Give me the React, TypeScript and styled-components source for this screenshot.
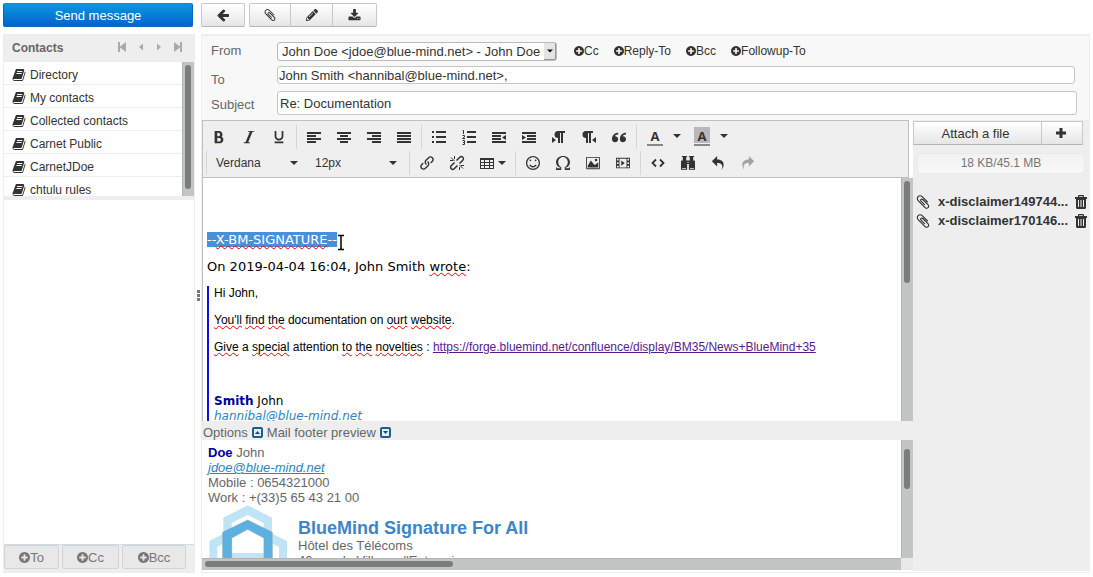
import React from "react";
import styled, { createGlobalStyle, css } from "styled-components";
import { FaPencilAlt } from "react-icons/fa";
import {
  ImBold,
  ImItalic,
  ImUnderline,
  ImQuotesLeft,
  ImLink,
  ImSmile,
  ImOmega,
  ImImage,
  ImFilm,
  ImBinoculars,
  ImUndo2,
  ImRedo2,
} from "react-icons/im";

const GlobalStyle = createGlobalStyle`
  *, *::before, *::after { box-sizing: border-box; }
  html, body { margin: 0; background: #fff; }
  body {
    font-family: "Liberation Sans", Arial, sans-serif;
    font-size: 13px;
    line-height: 15px;
    color: #666;
  }
  button, input, select { font: inherit; color: inherit; margin: 0; }
  svg { display: block; flex: none; }
`;

/* ---------- icons ---------- */

const awesome = {
  arrowLeft:
    "M1664 896v128q0 53-32.500 90.500t-84.500 37.500h-704l293 294q38 36 38 90t-38 90l-75 76q-37 37-90 37-52 0-91-37l-651-652q-37-37-37-90 0-52 37-91l651-650q38-38 91-38 52 0 90 38l75 74q38 38 38 91t-38 91l-293 293h704q52 0 84.500 37.500t32.500 90.500z",
  paperclip:
    "M1596 1385q0 117-79 196t-196 79q-135 0-235-100l-777-776q-113-115-113-271 0-159 110-270t269-111q158 0 273 113l605 606q10 10 10 22 0 16-30.500 46.500t-46.500 30.500q-13 0-23-10l-606-607q-79-77-181-77-106 0-179 75t-73 181q0 105 76 181l776 777q63 63 145 63 64 0 106-42t42-106q0-82-63-145l-581-581q-26-24-60-24-29 0-48 19t-19 48q0 32 25 59l410 410q10 10 10 22 0 16-31 47t-47 31q-12 0-22-10l-410-410q-63-61-63-149 0-82 57-139t139-57q88 0 149 63l581 581q100 98 100 235z",
  download:
    "M1344 1344q0-26-19-45t-45-19-45 19-19 45 19 45 45 19 45-19 19-45zm256 0q0-26-19-45t-45-19-45 19-19 45 19 45 45 19 45-19 19-45zm128-224v320q0 40-28 68t-68 28h-1472q-40 0-68-28t-28-68v-320q0-40 28-68t68-28h465l135 136q58 56 136 56t136-56l136-136h464q40 0 68 28t28 68zm-325-569q17 41-14 70l-448 448q-18 19-45 19t-45-19l-448-448q-31-29-14-70 17-39 59-39h256v-448q0-26 19-45t45-19h256q26 0 45 19t19 45v448h256q42 0 59 39z",
  book: "M1703 478q40 57 18 129l-275 906q-19 64-76.500 107.500t-122.500 43.500h-923q-77 0-148.500-53.500t-99.500-131.500q-24-67-2-127 0-4 3-27t4-37q1-8-3-21.500t-3-19.500q2-11 8-21t16.500-23.500 16.500-23.500q23-38 45-91.500t30-91.500q3-10 .5-30t-.5-28q3-11 17-28t17-23q21-36 42-92t25-90q1-9-2.500-32t.5-28q4-13 22-30.500t22-22.500q19-26 42.500-84.500t27.500-96.500q1-8-3-25.500t-2-26.500q2-8 9-18t18-23 17-21q8-12 16.500-30.500t15-35 16-36 19.500-32 26.500-23.500 36-11.500 47.500 5.500l-1 3q38-9 51-9h761q74 0 114 56t18 130l-274 906q-36 119-71.500 153.500t-128.500 34.500h-869q-27 0-38 15-11 16-1 43 24 70 144 70h923q29 0 56-15.500t35-41.500l300-987q7-22 5-57 38 15 59 43zm-1064 2q-4 13 2 22.500t20 9.500h608q13 0 25.500-9.500t16.500-22.500l21-64q4-13-2-22.500t-20-9.500h-608q-13 0-25.500 9.500t-16.500 22.500zm-83 256q-4 13 2 22.500t20 9.500h608q13 0 25.500-9.500t16.500-22.500l21-64q4-13-2-22.500t-20-9.500h-608q-13 0-25.500 9.500t-16.500 22.500z",
};

const Awesome = ({ name, size = 14 }: { name: keyof typeof awesome; size?: number }) => (
  <svg width={size} height={size} viewBox="0 0 1792 1792" fill="currentColor" aria-hidden="true">
    <path d={awesome[name]} />
  </svg>
);

const PlusCircle = ({ size = 10 }: { size?: number }) => (
  <svg width={size} height={size} viewBox="128 128 1536 1536" fill="currentColor" aria-hidden="true">
    <path d="M1344 960v-128q0-26-19-45t-45-19h-256v-256q0-26-19-45t-45-19h-128q-26 0-45 19t-19 45v256h-256q-26 0-45 19t-19 45v128q0 26 19 45t45 19h256v256q0 26 19 45t45 19h128q26 0 45-19t19-45v-256h256q26 0 45-19t19-45zm320-64q0 209-103 385.500t-279.500 279.500-385.500 103-385.500-103-279.500-279.500-103-385.500 103-385.500 279.500-279.500 385.500-103 385.500 103 279.500 279.500 103 385.500z" />
  </svg>
);

type Bar = [number, number, number, number];

const Bars = ({ bars, children }: { bars: Bar[]; children?: React.ReactNode }) => (
  <svg width="16" height="16" viewBox="0 0 16 16" fill="currentColor" aria-hidden="true">
    {bars.map(([x, y, width, height]) => (
      <rect key={`${x}-${y}`} x={x} y={y} width={width} height={height} />
    ))}
    {children}
  </svg>
);

const AlignLeft = () => <Bars bars={[[1, 3, 14, 2], [1, 6, 9, 2], [1, 9, 14, 2], [1, 12, 9, 2]]} />;
const AlignCenter = () => <Bars bars={[[1, 3, 14, 2], [4, 6, 8, 2], [1, 9, 14, 2], [4, 12, 8, 2]]} />;
const AlignRight = () => <Bars bars={[[1, 3, 14, 2], [6, 6, 9, 2], [1, 9, 14, 2], [6, 12, 9, 2]]} />;
const AlignJustify = () => <Bars bars={[[1, 3, 14, 2], [1, 6, 14, 2], [1, 9, 14, 2], [1, 12, 14, 2]]} />;
const BulletList = () => (
  <Bars bars={[[1, 2, 2, 2], [5, 2, 10, 2], [1, 7, 2, 2], [5, 7, 10, 2], [1, 12, 2, 2], [5, 12, 10, 2]]} />
);
const NumberList = () => (
  <Bars bars={[[6, 2, 9, 2], [6, 7, 9, 2], [6, 12, 9, 2]]}>
    <path
      d="M1.500 1.500h1v3.500M1.500 6.500h2v1.500l-2 1.500h2.500M1.500 11.500h2v4h-2M2 13.500h1.500"
      fill="none"
      stroke="currentColor"
    />
  </Bars>
);
const Outdent = () => (
  <Bars bars={[[1, 3, 14, 2], [1, 6, 9, 2], [1, 9, 9, 2], [1, 12, 14, 2]]}>
    <path d="M15 6v5l-4-2.500z" />
  </Bars>
);
const Indent = () => (
  <Bars bars={[[1, 3, 14, 2], [6, 6, 9, 2], [6, 9, 9, 2], [1, 12, 14, 2]]}>
    <path d="M1 6v5l4-2.500z" />
  </Bars>
);
const LeftToRight = () => (
  <Bars bars={[[7, 2, 2, 12], [10, 2, 2, 12], [7, 2, 7, 2]]}>
    <path d="M8 2H7a3.500 3.500 0 0 0 0 7h1zM1 8v6l4-3z" />
  </Bars>
);
const RightToLeft = () => (
  <Bars bars={[[5, 2, 2, 12], [8, 2, 2, 12], [5, 2, 7, 2]]}>
    <path d="M6 2H5a3.500 3.500 0 0 0 0 7h1zM15 8v6l-4-3z" />
  </Bars>
);
const TableIcon = () => (
  <svg width="16" height="16" viewBox="0 0 16 16" fill="currentColor" aria-hidden="true">
    <path
      fillRule="evenodd"
      d="M1 3h14v11H1zM2 5v2h3V5zM6 5v2h4V5zM11 5v2h3V5zM2 8v2h3V8zM6 8v2h4V8zM11 8v2h3V8zM2 11v2h3v-2zM6 11v2h4v-2zM11 11v2h3v-2z"
    />
  </svg>
);
const Unlink = () => (
  <svg width="16" height="16" viewBox="0 0 16 16" fill="none" stroke="currentColor" strokeWidth="1.500" aria-hidden="true">
    <path d="M7.500 5.500l3.300-3.300a2 2 0 0 1 3 3L10.500 8.500M8.500 10.500l-3.300 3.300a2 2 0 0 1-3-3L5.500 7.500" />
    <path strokeWidth="1" d="M2 2.500l3.500 3.500M5.500 1v3M1 5.500h3M14 13.500L10.500 10M10.500 15v-3M15 10.500h-3" />
  </svg>
);
const Code = () => (
  <svg width="16" height="16" viewBox="0 0 16 16" fill="none" stroke="currentColor" strokeWidth="1.800" aria-hidden="true">
    <path d="M6 4.500L2.500 8 6 11.500M10 4.500L13.500 8 10 11.500" />
  </svg>
);
const Trash = () => (
  <svg width="12" height="14" viewBox="0 0 12 14" fill="currentColor" aria-hidden="true">
    <path
      fillRule="evenodd"
      d="M4 0h4q1 0 1 1v1h3v2h-1v8.500q0 1.500-1.500 1.500h-7Q1 14 1 12.500V4H0V2h3V1q0-1 1-1zM4.200 1.200V2h3.600v-.8zM3 5v7h1V5zM5.500 5v7h1V5zM8 5v7h1V5z"
    />
  </svg>
);
const Plus = () => (
  <svg width="10" height="10" viewBox="0 0 10 10" fill="currentColor" aria-hidden="true">
    <path d="M3.500 0h3v3.500H10v3H6.500V10h-3V6.500H0v-3h3.500z" />
  </svg>
);
const Caret = () => (
  <svg width="8" height="4" viewBox="0 0 8 4" fill="currentColor" aria-hidden="true">
    <path d="M0 0h8L4 4z" />
  </svg>
);
const Pager = ({ d, width = 9 }: { d: string; width?: number }) => (
  <svg width={width} height="10" viewBox={`0 0 ${width} 10`} fill="currentColor" aria-hidden="true">
    <path d={d} />
  </svg>
);
const Toggle = ({ up }: { up?: boolean }) => (
  <svg width="11" height="11" viewBox="0 0 11 11" aria-hidden="true">
    <rect x="1" y="1" width="9" height="9" rx="1" fill="#e3edf4" stroke="#205d87" strokeWidth="2" />
    <path d={up ? "M3 7h5L5.500 4z" : "M3 4h5L5.500 7z"} fill="#174a6e" />
  </svg>
);
const IBeam = () => (
  <svg width="8" height="17" viewBox="0 0 8 17" fill="none" aria-hidden="true">
    <path d="M1 1.500h2.500l.5.500.500-.500H7M4 2v13M1 15.500h2.500l.5-.500.500.500H7" stroke="#fff" strokeWidth="3" />
    <path d="M1 1.500h2.500l.5.500.500-.500H7M4 2v13M1 15.500h2.500l.5-.500.500.500H7" stroke="#000" strokeWidth="1.500" />
  </svg>
);
const Logo = () => (
  <svg width="80" height="70" viewBox="54 270 240 210" aria-hidden="true">
    <path
      fill="#bfe4f6"
      fillRule="evenodd"
      d="M173 271l73 37v130H100V308zM173 300l-48 24v90h96v-90z"
    />
    <path fill="#bfe4f6" d="M98 357v30l-16 8v85H58V378zM248 357v30l19 8v85h24V378z" />
    <path
      fill="#5bb2e1"
      stroke="#7d98a8"
      strokeWidth="1.500"
      fillRule="evenodd"
      d="M173 315l74 37v128H98V352zM173 343l-48 26v111h97V369z"
    />
  </svg>
);

/* ---------- page frame ---------- */

const Page = styled.div`
  display: grid;
  grid-template-columns: 192px minmax(0, 1fr);
  grid-template-rows: 24px minmax(0, 1fr);
  gap: 7px 6px;
  height: 100vh;
  min-height: 480px;
  padding: 3px 3px 4px;
`;

const SendButton = styled.button`
  width: 190px;
  border: 1px solid #0a66b8;
  border-top-color: #0d8ad0;
  border-radius: 2px;
  padding: 0;
  background: linear-gradient(#0c97dd, #0364cf);
  color: #fff;
`;

const greyButton = css`
  display: flex;
  align-items: center;
  justify-content: center;
  border: 1px solid #c8c8c8;
  border-bottom-color: #b5b5b5;
  padding: 0;
  background: linear-gradient(#fff, #e6e6e6);
  color: #333;
`;

const TopBar = styled.div`
  display: flex;
  gap: 4px;
`;

const TopGroup = styled.div`
  display: flex;
`;

const TopButton = styled.button<{ $width: number }>`
  ${greyButton}
  width: ${(p) => p.$width}px;
  &:first-child { border-radius: 2px 0 0 2px; }
  &:last-child { border-radius: 0 2px 2px 0; }
  &:only-child { border-radius: 2px; }
  & + & { border-left: 0; }
`;

/* ---------- contacts ---------- */

const Sidebar = styled.aside`
  display: flex;
  flex-direction: column;
  border: 1px solid #eee;
`;

const SidebarHeader = styled.header`
  display: flex;
  justify-content: space-between;
  align-items: center;
  height: 27px;
  padding: 0 12px 0 8px;
  background: #eee;
`;

const SidebarTitle = styled.h2`
  margin: 0;
  font-size: 12px;
`;

const PagerGroup = styled.nav`
  display: flex;
  gap: 12px;
  padding-bottom: 3px;
  color: #aaa;
`;

const PlainButton = styled.button`
  display: flex;
  align-items: center;
  border: 0;
  padding: 0;
  background: none;
`;

const BookScroll = styled.div`
  display: flex;
  height: 134px;
  overflow: hidden;
`;

const BookList = styled.ul`
  flex: 1;
  margin: 0;
  padding: 0;
  list-style: none;
`;

const BookItem = styled.li`
  display: flex;
  align-items: center;
  gap: 4px;
  height: 23px;
  padding: 4px 8px 0;
  border-bottom: 1px solid #eee;
  font-size: 12px;
  color: #333;
`;

const Divider = styled.div`
  height: 4px;
  background: #eee;
`;

const SidebarFooter = styled.footer`
  display: flex;
  gap: 3px;
  height: 28px;
  margin-top: auto;
  padding-bottom: 3px;
  border-top: 1px solid #cfdde6;
  background: #eee;
`;

const RecipientButton = styled.button<{ $width: number }>`
  display: flex;
  align-items: center;
  justify-content: center;
  width: ${(p) => p.$width}px;
  border: 1px solid #d3d3d3;
  border-radius: 2px;
  padding: 0;
  background: #e8e8e8;
  color: #777;
`;

/* ---------- scroll bars ---------- */

const Track = styled.div<{ $side?: boolean }>`
  display: flex;
  flex: none;
  ${(p) =>
    p.$side
      ? css`
          height: 12px;
          padding: 2px 3px;
          border-top: 1px solid #b2b4b4;
        `
      : css`
          width: 12px;
          padding: 3px 2px;
          border-left: 1px solid #b2b4b4;
        `}
  background: #c3c5c4;
`;

const Thumb = styled.div<{ $length: number; $side?: boolean; $shift?: number }>`
  ${(p) => (p.$side ? "height" : "width")}: 6px;
  ${(p) => (p.$side ? "width" : "height")}: ${(p) => p.$length}px;
  margin-top: ${(p) => p.$shift ?? 0}px;
  border-radius: 3px;
  background: #7a7d7c;
`;

/* ---------- composer ---------- */

const Composer = styled.main`
  position: relative;
  display: flex;
  flex-direction: column;
  min-height: 0;
  border: 1px solid #eee;
  border-top-width: 2px;
`;

const Grip = styled.div`
  position: absolute;
  left: -5px;
  top: 254px;
  display: grid;
  gap: 1px;
  span { width: 3px; height: 3px; background: #777; }
`;

const Headers = styled.form`
  display: grid;
  grid-template-columns: 66px minmax(0, 1fr);
  align-content: start;
  height: 84px;
  padding: 4px 12px 0 9px;
  background: #f8f8f8;
`;

const Label = styled.label<{ $low?: boolean }>`
  padding-top: ${(p) => (p.$low ? 6 : 3)}px;
`;

const HeaderLine = styled.div`
  display: flex;
  align-items: center;
  gap: 15px;
  height: 26px;
  padding-bottom: 4px;
`;

const SelectBox = styled.div`
  position: relative;
  width: 280px;
  margin-right: 2px;
`;

const FromSelect = styled.select`
  appearance: none;
  display: block;
  width: 100%;
  height: 19px;
  border: 1px solid #bbb;
  border-radius: 3px;
  padding: 0 14px 0 4px;
  background: #fff;
  color: #333;
`;

const SelectArrow = styled.span`
  position: absolute;
  top: 1px;
  right: 1px;
  bottom: 1px;
  display: flex;
  align-items: center;
  justify-content: center;
  width: 12px;
  border: solid #999;
  border-width: 0 1px 1px 0;
  background: #e4e4e4;
  color: #111;
  pointer-events: none;
  svg { width: 6px; }
`;

const AddField = styled(PlainButton)`
  font-size: 12px;
  color: #333;
`;

const Field = styled.input<{ $tall?: boolean }>`
  width: 100%;
  height: ${(p) => (p.$tall ? 24 : 18)}px;
  border: 1px solid #c6c6c6;
  border-radius: 3px;
  padding: 0 ${(p) => (p.$tall ? 2 : 1)}px;
  background: #fff;
  color: #333;
`;

const ToLine = styled.div`
  height: 25px;
  padding-right: 2px;
`;

const Body = styled.div`
  display: flex;
  flex: 1;
  min-height: 0;
`;

const EditorColumn = styled.section`
  display: flex;
  flex: 1;
  flex-direction: column;
  min-width: 0;
`;

const Toolbar = styled.div`
  display: flex;
  flex-direction: column;
  gap: 2px;
  margin-right: 4px;
  height: 58px;
  padding: 4px 0 2px;
  border: 1px solid #c0c0c0;
  background: #efefef;
  color: #333;
`;

const ToolRow = styled.div`
  display: flex;
  height: 24px;
  padding-left: 1px;
`;

const ToolGroup = styled.div<{ $line?: boolean }>`
  display: flex;
  ${(p) =>
    p.$line &&
    css`
      border-left: 1px solid #d6d6d6;
      padding-left: 2px;
      margin-left: 2px;
    `}
`;

const ToolButton = styled.button<{ $off?: boolean; $size?: number; $wide?: boolean }>`
  display: flex;
  align-items: center;
  justify-content: center;
  gap: 3px;
  width: ${(p) => (p.$wide ? 41 : 30)}px;
  border: 0;
  padding: 0;
  background: none;
  opacity: ${(p) => (p.$off ? 0.4 : 1)};
  & > svg:first-child {
    width: ${(p) => p.$size ?? 16}px;
    height: ${(p) => p.$size ?? 16}px;
  }
`;

const ColorButton = styled.button`
  display: flex;
  align-items: center;
  gap: 10px;
  width: 47px;
  border: 0;
  padding: 0 0 2px 8px;
  background: none;
`;

const ColorLetter = styled.span<{ $filled?: boolean }>`
  width: 16px;
  height: 19px;
  border-bottom: 2px solid #888;
  background: ${(p) => (p.$filled ? "linear-gradient(#b8b8b8 16px, transparent 16px)" : "none")};
  font: bold 13px/18px "Open Sans", sans-serif;
  text-align: center;
`;

const ListBox = styled.div`
  position: relative;
  width: 99px;
  svg {
    position: absolute;
    right: 10px;
    top: 10px;
    pointer-events: none;
  }
`;

const ListSelect = styled.select`
  appearance: none;
  width: 100%;
  height: 24px;
  border: 0;
  padding: 0 20px 0 7px;
  background: none;
  font-size: 12px;
`;

const Pane = styled.div`
  display: flex;
  flex: 1;
  min-height: 0;
`;

const Message = styled.div`
  flex: 1;
  min-width: 0;
  overflow: hidden;
  border-left: 1px solid #c0c0c0;
  padding: 0 4px;
  background: #fff;
  font-family: "DejaVu Sans", Verdana, sans-serif;
  font-size: 12px;
  color: #000;
  outline: 0;
`;

const Paragraph = styled.p<{ $face?: "sans" | "large" }>`
  min-height: 15px;
  margin: 0 0 12px;
  ${(p) => p.$face === "sans" && 'font-family: "Liberation Sans", Arial, sans-serif;'}
  ${(p) => p.$face === "large" && "font-size: 13px;"}
`;

const Selected = styled.span`
  position: relative;
  display: inline-block;
  background: #4a90d9;
  color: #fff;
`;

const Pointer = styled.span`
  position: absolute;
  left: 100%;
  top: 2px;
`;

const Typo = styled.span`
  text-decoration: underline wavy #e00 1px;
  text-decoration-skip-ink: none;
`;

const Quote = styled.blockquote`
  margin: 0;
  border-left: 2px solid #1010e0;
  padding-left: 5px;
`;

const VisitedLink = styled.a`
  color: #551a8b;
`;

const MailLink = styled.a`
  color: #2a85c0;
  font-style: italic;
`;

const Name = styled.b`
  color: #00009c;
`;

const Options = styled.div`
  display: flex;
  align-items: center;
  gap: 4px;
  height: 19px;
  padding: 4px 0 0 1px;
  background: #eee;
`;

const OptionButton = styled(PlainButton)`
  gap: 4px;
  height: 15px;
`;

const PreviewPane = styled.div`
  display: flex;
  height: 118px;
`;

const Preview = styled.div`
  flex: 1;
  min-width: 0;
  overflow: hidden;
  padding: 5px 6px 0;
  background: #fff;
`;

const Signature = styled.div`
  display: flex;
  gap: 10px;
`;

const SignatureText = styled.div`
  padding-top: 13px;
  white-space: nowrap;
`;

const SignatureTitle = styled.h3`
  margin: 0;
  font-size: 18px;
  line-height: 20px;
  color: #3d85c6;
`;

const TrackRow = styled.div`
  display: flex;
  margin-bottom: 2px;
`;

const FillTrack = styled(Track)`
  flex: 1;
`;

const Corner = styled.div`
  width: 12px;
  background: #e8e8e6;
`;

/* ---------- attachments ---------- */

const Attachments = styled.aside`
  width: 176px;
  margin-bottom: 1px;
  background: #eee;
`;

const AttachBar = styled.div`
  display: flex;
  margin-top: 1px;
`;

const AttachButton = styled.button<{ $grow?: boolean }>`
  ${greyButton}
  width: ${(p) => (p.$grow ? 129 : 41)}px;
  height: 24px;
  padding-right: ${(p) => (p.$grow ? 4 : 2)}px;
  & + & { border-left: 0; }
`;

const Quota = styled.div`
  height: 21px;
  margin: 8px 4px 0;
  border: 1px solid #e9e9e9;
  border-radius: 4px;
  background: linear-gradient(#f2f2f2, #f8f8f8);
  font-size: 12px;
  line-height: 19px;
  text-align: center;
  color: #777;
`;

const FileList = styled.ul`
  margin: 18px 0 0;
  padding: 0 3px 0 2px;
  list-style: none;
`;

const FileItem = styled.li`
  display: flex;
  align-items: center;
  gap: 7px;
  height: 19px;
  font-weight: bold;
  color: #333;
`;

const FileName = styled.span`
  flex: 1;
  white-space: nowrap;
`;

/* ---------- content ---------- */

const books = ["Directory", "My contacts", "Collected contacts", "Carnet Public", "CarnetJDoe", "chtulu rules"];
const extraFields = ["Cc", "Reply-To", "Bcc", "Followup-To"];
const files = ["x-disclaimer149744...", "x-disclaimer170146..."];

type Tool = { label: string; icon: React.ReactNode; size?: number; off?: boolean; menu?: boolean };

const styleTools: Tool[] = [
  { label: "Bold", icon: <ImBold />, size: 14 },
  { label: "Italic", icon: <ImItalic />, size: 14 },
  { label: "Underline", icon: <ImUnderline />, size: 14 },
];
const alignTools: Tool[] = [
  { label: "Align left", icon: <AlignLeft /> },
  { label: "Align center", icon: <AlignCenter /> },
  { label: "Align right", icon: <AlignRight /> },
  { label: "Justify", icon: <AlignJustify /> },
];
const blockTools: Tool[] = [
  { label: "Bullet list", icon: <BulletList /> },
  { label: "Numbered list", icon: <NumberList /> },
  { label: "Decrease indent", icon: <Outdent /> },
  { label: "Increase indent", icon: <Indent /> },
  { label: "Left to right", icon: <LeftToRight /> },
  { label: "Right to left", icon: <RightToLeft /> },
  { label: "Blockquote", icon: <ImQuotesLeft />, size: 14 },
];
const linkTools: Tool[] = [
  { label: "Insert link", icon: <ImLink />, size: 14 },
  { label: "Remove link", icon: <Unlink /> },
  { label: "Table", icon: <TableIcon />, menu: true },
];
const insertTools: Tool[] = [
  { label: "Emoticons", icon: <ImSmile />, size: 14 },
  { label: "Special character", icon: <ImOmega />, size: 14 },
  { label: "Insert image", icon: <ImImage />, size: 14 },
  { label: "Insert video", icon: <ImFilm />, size: 14 },
];
const editTools: Tool[] = [
  { label: "Source code", icon: <Code /> },
  { label: "Find and replace", icon: <ImBinoculars />, size: 14 },
  { label: "Undo", icon: <ImUndo2 />, size: 14 },
  { label: "Redo", icon: <ImRedo2 />, size: 14, off: true },
];

const Tools = ({ tools, line }: { tools: Tool[]; line?: boolean }) => (
  <ToolGroup $line={line}>
    {tools.map((t) => (
      <ToolButton key={t.label} type="button" aria-label={t.label} $size={t.size} $off={t.off} $wide={t.menu}>
        {t.icon}
        {t.menu && <Caret />}
      </ToolButton>
    ))}
  </ToolGroup>
);

const pagerButtons = [
  { label: "First page", d: "M0 0h2v4.500L8 0v10L2 5.500V10H0z", width: 9 },
  { label: "Previous page", d: "M4 1.500v7L0 5z", width: 5 },
  { label: "Next page", d: "M1 1.500v7L5 5z", width: 5 },
  { label: "Last page", d: "M9 0H7v4.500L1 0v10l6-4.500V10h2z", width: 9 },
];

export default function App() {
  return (
    <>
      <GlobalStyle />
      <Page>
        <SendButton type="button">Send message</SendButton>
        <TopBar>
          <TopGroup>
            <TopButton type="button" aria-label="Back" $width={44}><Awesome name="arrowLeft" /></TopButton>
          </TopGroup>
          <TopGroup>
            <TopButton type="button" aria-label="Attach" $width={42}><Awesome name="paperclip" size={14} /></TopButton>
            <TopButton type="button" aria-label="Edit" $width={42}><FaPencilAlt size={12} /></TopButton>
            <TopButton type="button" aria-label="Save" $width={44}><Awesome name="download" size={13} /></TopButton>
          </TopGroup>
        </TopBar>

        <Sidebar>
          <SidebarHeader>
            <SidebarTitle>Contacts</SidebarTitle>
            <PagerGroup aria-label="Contact pages">
              {pagerButtons.map((b) => (
                <PlainButton key={b.label} type="button" aria-label={b.label}>
                  <Pager d={b.d} width={b.width} />
                </PlainButton>
              ))}
            </PagerGroup>
          </SidebarHeader>
          <BookScroll>
            <BookList>
              {books.map((b) => (
                <BookItem key={b}>
                  <Awesome name="book" />
                  {b}
                </BookItem>
              ))}
            </BookList>
            <Track><Thumb $length={124} /></Track>
          </BookScroll>
          <Divider />
          <SidebarFooter>
            <RecipientButton type="button" $width={55}><PlusCircle size={11} />To</RecipientButton>
            <RecipientButton type="button" $width={57}><PlusCircle size={11} />Cc</RecipientButton>
            <RecipientButton type="button" $width={64}><PlusCircle size={11} />Bcc</RecipientButton>
          </SidebarFooter>
        </Sidebar>

        <Composer>
          <Grip><span /><span /><span /></Grip>
          <Headers>
            <Label htmlFor="from">From</Label>
            <HeaderLine>
              <SelectBox>
                <FromSelect id="from">
                  <option>{"John Doe <jdoe@blue-mind.net> - John Doe"}</option>
                </FromSelect>
                <SelectArrow><Caret /></SelectArrow>
              </SelectBox>
              {extraFields.map((f) => (
                <AddField key={f} type="button">
                  <PlusCircle />
                  {f}
                </AddField>
              ))}
            </HeaderLine>
            <Label htmlFor="to" $low>To</Label>
            <ToLine>
              <Field id="to" defaultValue="John Smith <hannibal@blue-mind.net>," />
            </ToLine>
            <Label htmlFor="subject" $low>Subject</Label>
            <Field id="subject" $tall defaultValue="Re: Documentation" />
          </Headers>

          <Body>
            <EditorColumn>
              <Toolbar role="toolbar" aria-label="Formatting">
                <ToolRow>
                  <Tools tools={styleTools} />
                  <Tools line tools={alignTools} />
                  <Tools line tools={blockTools} />
                  <ToolGroup $line>
                    <ColorButton type="button" aria-label="Text color">
                      <ColorLetter>A</ColorLetter>
                      <Caret />
                    </ColorButton>
                    <ColorButton type="button" aria-label="Background color">
                      <ColorLetter $filled>A</ColorLetter>
                      <Caret />
                    </ColorButton>
                  </ToolGroup>
                </ToolRow>
                <ToolRow>
                  <ToolGroup $line>
                    <ListBox>
                      <ListSelect aria-label="Font family"><option>Verdana</option></ListSelect>
                      <Caret />
                    </ListBox>
                    <ListBox>
                      <ListSelect aria-label="Font size"><option>12px</option></ListSelect>
                      <Caret />
                    </ListBox>
                  </ToolGroup>
                  <Tools line tools={linkTools} />
                  <Tools line tools={insertTools} />
                  <Tools line tools={editTools} />
                </ToolRow>
              </Toolbar>
              <Pane>
                <Message contentEditable suppressContentEditableWarning spellCheck={false} role="textbox" aria-label="Message">
                  <Paragraph />
                  <Paragraph />
                  <Paragraph $face="large">
                    <Selected>
                      --<Typo>X-BM-SIGNATURE</Typo>--
                      <Pointer><IBeam /></Pointer>
                    </Selected>
                  </Paragraph>
                  <Paragraph $face="large">
                    On 2019-04-04 16:04, John Smith <Typo>wrote</Typo>:
                  </Paragraph>
                  <Quote>
                    <Paragraph $face="sans">Hi John,</Paragraph>
                    <Paragraph $face="sans">
                      <Typo>You'll</Typo> <Typo>find</Typo> <Typo>the</Typo> documentation on <Typo>ourt</Typo>{" "}
                      <Typo>website</Typo>.
                    </Paragraph>
                    <Paragraph $face="sans">
                      <Typo>Give</Typo> a <Typo>special</Typo> attention <Typo>to</Typo> <Typo>the</Typo>{" "}
                      <Typo>novelties</Typo> :{" "}
                      <VisitedLink href="https://forge.bluemind.net/confluence/display/BM35/News+BlueMind+35">
                        https://forge.bluemind.net/confluence/display/BM35/News+BlueMind+35
                      </VisitedLink>
                    </Paragraph>
                    <Paragraph />
                    <Paragraph>
                      <Name>Smith</Name> John
                      <br />
                      <MailLink href="mailto:hannibal@blue-mind.net">hannibal@blue-mind.net</MailLink>
                    </Paragraph>
                  </Quote>
                </Message>
                <Track><Thumb $length={102} /></Track>
              </Pane>
              <Options>
                <OptionButton type="button">Options <Toggle up /></OptionButton>
                <OptionButton type="button">Mail footer preview <Toggle /></OptionButton>
              </Options>
              <PreviewPane>
                <Preview>
                  <Name>Doe</Name> John
                  <br />
                  <MailLink href="mailto:jdoe@blue-mind.net">jdoe@blue-mind.net</MailLink>
                  <br />
                  Mobile : 0654321000
                  <br />
                  Work : +(33)5 65 43 21 00
                  <Signature>
                    <Logo />
                    <SignatureText>
                      <SignatureTitle>BlueMind Signature For All</SignatureTitle>
                      Hôtel des Télécoms
                      <br />
                      40 rue du Village d'Entreprises
                    </SignatureText>
                  </Signature>
                </Preview>
                <Track><Thumb $length={40} $shift={6} /></Track>
              </PreviewPane>
              <TrackRow>
                <FillTrack $side><Thumb $side $length={248} /></FillTrack>
                <Corner />
              </TrackRow>
            </EditorColumn>

            <Attachments>
              <AttachBar>
                <AttachButton type="button" $grow>Attach a file</AttachButton>
                <AttachButton type="button" aria-label="Add attachment"><Plus /></AttachButton>
              </AttachBar>
              <Quota>18 KB/45.1 MB</Quota>
              <FileList>
                {files.map((f) => (
                  <FileItem key={f}>
                    <Awesome name="paperclip" size={16} />
                    <FileName>{f}</FileName>
                    <PlainButton type="button" aria-label={`Delete ${f}`}><Trash /></PlainButton>
                  </FileItem>
                ))}
              </FileList>
            </Attachments>
          </Body>
        </Composer>
      </Page>
    </>
  );
}
